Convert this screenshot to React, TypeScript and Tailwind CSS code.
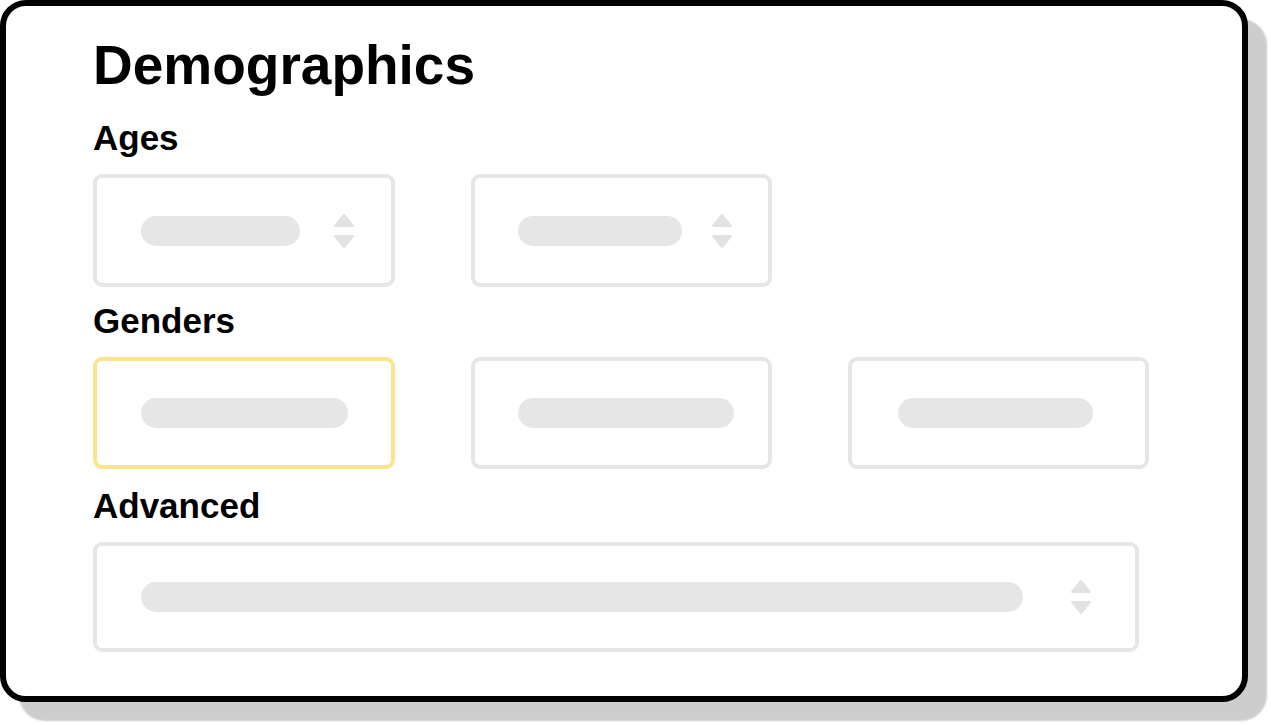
import React from 'react';

type Campo = {
  pill: number;
  offset: number;
  flechas?: number;
  activo?: boolean;
};

// Placeholder ancho para cada selector
const edades: Campo[] = [
  { pill: 159, offset: 44, flechas: 33 },
  { pill: 164, offset: 43, flechas: 29 },
];

const generos: Campo[] = [
  { pill: 207, offset: 44, activo: true },
  { pill: 216, offset: 43 },
  { pill: 195, offset: 46 },
];

const Flechas: React.FC<{ ml: number }> = ({ ml }) => (
  <svg width="22" height="36" viewBox="0 0 22 36" style={{ marginLeft: ml }} className="shrink-0">
    <path d="M11 2 L20 13 L2 13 Z" fill="#e2e2e2" stroke="#e2e2e2" strokeWidth="2" strokeLinejoin="round" />
    <path d="M2 23 L20 23 L11 34 Z" fill="#e2e2e2" stroke="#e2e2e2" strokeWidth="2" strokeLinejoin="round" />
  </svg>
);

const Caja: React.FC<{ campo: Campo; alto: string }> = ({ campo, alto }) => (
  <div
    className={`flex items-center rounded-[9px] border-[4px] bg-white ${alto} ${
      campo.activo ? 'border-[#fbe48c]' : 'border-[#e6e6e6]'
    }`}
  >
    <div className="h-[30px] rounded-full bg-[#e6e6e6] shrink-0" style={{ width: campo.pill, marginLeft: campo.offset }} />
    {campo.flechas !== undefined && <Flechas ml={campo.flechas} />}
  </div>
);

const Etiqueta: React.FC<{ texto: string; className?: string }> = ({ texto, className }) => (
  <h2 className={`text-[35px] leading-none font-bold text-black ${className ?? ''}`}>{texto}</h2>
);

const App: React.FC = () => {
  return (
    <div className="w-[1271px] h-[725px] bg-white overflow-hidden" style={{ fontFamily: '"Liberation Sans", Arial, sans-serif' }}>
      <div className="w-[1248px] h-[702px] rounded-[26px] border-[6px] border-black bg-white shadow-[19px_19px_2px_#cdcdcd] pl-[87px] pt-[32px]">
        <h1 className="text-[55px] leading-none font-bold text-black">Demographics</h1>

        <Etiqueta texto="Ages" className="mt-[27px]" />
        <div className="mt-[19px] grid grid-cols-[302px_301px_301px] gap-x-[76px]">
          {edades.map((c, i) => (
            <Caja key={i} campo={c} alto="h-[113px]" />
          ))}
        </div>

        <Etiqueta texto="Genders" className="mt-[16px]" />
        <div className="mt-[19px] grid grid-cols-[302px_301px_301px] gap-x-[76px]">
          {generos.map((c, i) => (
            <Caja key={i} campo={c} alto="h-[112px]" />
          ))}
        </div>

        <Etiqueta texto="Advanced" className="mt-[19px]" />
        <div className="mt-[19px] w-[1046px]">
          <Caja campo={{ pill: 882, offset: 44, flechas: 47 }} alto="h-[110px]" />
        </div>
      </div>
    </div>
  );
};

export default App;
